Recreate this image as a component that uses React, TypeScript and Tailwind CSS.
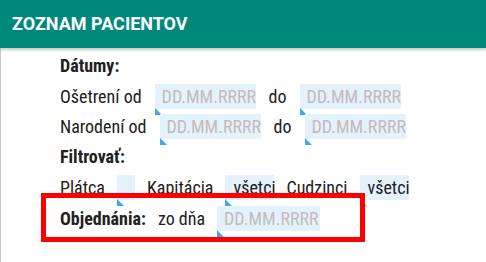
import React from 'react';

// Small blue marker under the lower-left corner of the inputs
const Corner = () => (
  <svg className="absolute left-0 top-[24px]" width="7" height="7" viewBox="0 0 7 7">
    <polygon points="0,0 0,7 7,7" fill="#42a5f5" />
  </svg>
);

const DateBox = ({ w = 'w-[101px]' }: { w?: string }) => (
  <div className={`relative h-[25px] ${w} shrink-0 bg-[#e3f2fd] pl-[7px] flex items-center`}>
    <span className="text-[#c4bcbc]">DD.MM.RRRR</span>
    <Corner />
  </div>
);

const SelectBox = ({ value, w }: { value?: string; w: string }) => (
  <div className={`relative h-[25px] ${w} shrink-0 bg-[#e3f2fd] pl-[8px] flex items-center`}>
    {value && <span>{value}</span>}
    <Corner />
  </div>
);

export default function App() {
  return (
    <div className="relative w-[486px] h-[262px] overflow-hidden bg-white font-['Roboto',_'Liberation_Sans',_sans-serif] text-[18px] leading-[24px] text-[#212121]">
      <header className="relative z-10 h-[48px] bg-[#00897b] pl-[12px] flex items-center shadow-[0_2px_3px_rgba(0,0,0,0.22)]">
        <h1 className="text-white font-bold text-[18px]">ZOZNAM PACIENTOV</h1>
      </header>

      <div className="h-[214px] border-l border-[#c8c8c8] pl-[59px] pt-[6px] flex flex-col font-['Roboto_Condensed',_'Roboto',_sans-serif] font-stretch-condensed text-[18px] whitespace-nowrap">
        <div className="h-[24px] font-bold">Dátumy:</div>

        <div className="mt-[6px] h-[25px] flex items-center gap-[13px]">
          <span>Ošetrení od</span>
          <DateBox />
          <span>do</span>
          <DateBox />
        </div>

        <div className="mt-[5px] h-[25px] flex items-center gap-[13px]">
          <span>Narodení od</span>
          <DateBox />
          <span>do</span>
          <DateBox />
        </div>

        <div className="mt-[6px] h-[24px] font-bold">Filtrovať:</div>

        <div className="mt-[6px] h-[25px] flex items-center gap-[12px]">
          <span>Plátca</span>
          <SelectBox w="w-[18px]" />
          <span>Kapitácia</span>
          <SelectBox value="všetci" w="w-[49px]" />
          <span>Cudzinci</span>
          <SelectBox value="všetci" w="w-[49px]" />
        </div>

        <div className="mt-[6px] h-[25px] flex items-center gap-[12px]">
          <span className="font-bold">Objednánia:</span>
          <span>zo dňa</span>
          <DateBox w="w-[103px]" />
        </div>
      </div>

      {/* red highlight annotation */}
      <div className="absolute left-[41px] top-[193px] w-[324px] h-[49px] border-[5px] border-[#ff0000] pointer-events-none" />
    </div>
  );
}
